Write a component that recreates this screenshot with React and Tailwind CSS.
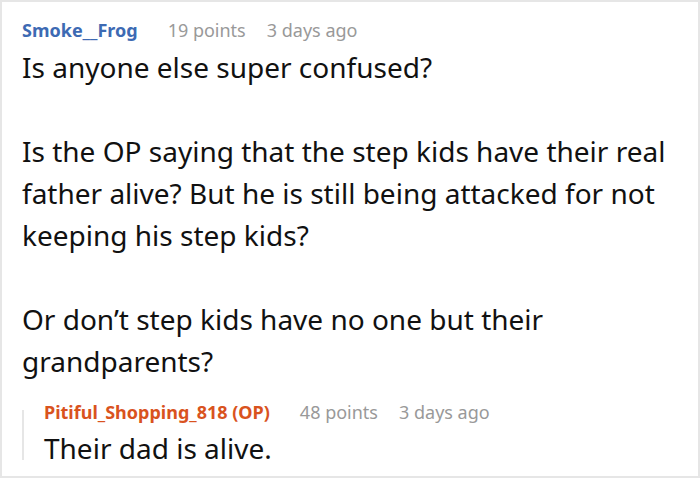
import React from 'react';

const font = { fontFamily: '"Noto Sans", "Open Sans", sans-serif' };

function Meta({ name, nameClass, points, time }) {
  return (
    <div className="flex items-center h-[24px] text-[18px] leading-[24px] whitespace-nowrap">
      <span className={`font-bold ${nameClass}`}>{name}</span>
      <span className="ml-[30px] text-[#999]">{points}</span>
      <span className="ml-[21px] text-[#999]">{time}</span>
    </div>
  );
}

export default function App() {
  return (
    <div style={font} className="w-[700px] h-[478px] bg-white border-2 border-[#e6e6e6] overflow-hidden">
      <div className="pl-[20px] pr-[20px] pt-[16px]">
        <Meta name="Smoke__Frog" nameClass="text-[#3d6ab3]" points="19 points" time="3 days ago" />
        <div className="mt-[4px] text-[28px] leading-[42px] text-[#111]">
          <p>Is anyone else super confused?</p>
          <p className="h-[42px]" />
          <p>Is the OP saying that the step kids have their real father alive? But he is still being attacked for not keeping his step kids?</p>
          <p className="h-[42px]" />
          <p>Or don’t step kids have no one but their grandparents?</p>
        </div>
        <div className="mt-[18px] flex">
          <div className="w-[2px] h-[50px] mt-[10px] bg-[#e6e6e6] shrink-0" />
          <div className="ml-[20px]">
            <Meta name="Pitiful_Shopping_818 (OP)" nameClass="text-[#d9531e]" points="48 points" time="3 days ago" />
            <p className="mt-[6px] text-[28px] leading-[36px] text-[#111]">Their dad is alive.</p>
          </div>
        </div>
      </div>
    </div>
  );
}
